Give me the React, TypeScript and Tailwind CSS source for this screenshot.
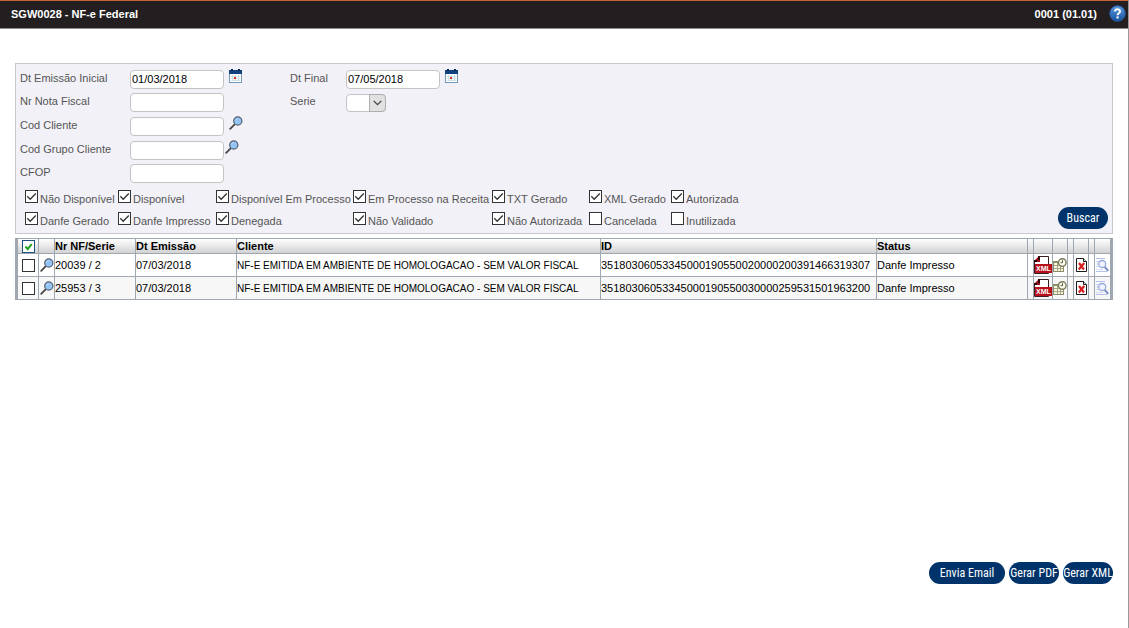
import { useState } from 'react'
import type { ComponentProps } from 'react'
import clsx from 'clsx'

const STATUS_FILTERS = [
  { label: 'Não Disponível', checked: true },
  { label: 'Disponível', checked: true },
  { label: 'Disponível Em Processo', checked: true },
  { label: 'Em Processo na Receita', checked: true },
  { label: 'TXT Gerado', checked: true },
  { label: 'XML Gerado', checked: true },
  { label: 'Autorizada', checked: true },
  { label: 'Danfe Gerado', checked: true },
  { label: 'Danfe Impresso', checked: true },
  { label: 'Denegada', checked: true },
  { label: 'Não Validado', checked: true },
  { label: 'Não Autorizada', checked: true },
  { label: 'Cancelada', checked: false },
  { label: 'Inutilizada', checked: false },
]

const INVOICES = [
  {
    numero: '20039 / 2',
    emissao: '07/03/2018',
    cliente: 'NF-E EMITIDA EM AMBIENTE DE HOMOLOGACAO - SEM VALOR FISCAL',
    id: '35180306053345000190550020000200391466319307',
    status: 'Danfe Impresso',
  },
  {
    numero: '25953 / 3',
    emissao: '07/03/2018',
    cliente: 'NF-E EMITIDA EM AMBIENTE DE HOMOLOGACAO - SEM VALOR FISCAL',
    id: '35180306053345000190550030000259531501963200',
    status: 'Danfe Impresso',
  },
]

function CalendarIcon() {
  return (
    <svg width="13" height="14" viewBox="0 0 13 14" className="block">
      <rect x="0.5" y="1.5" width="12" height="12" fill="#fff" stroke="#6f97b8" />
      <path d="M2 7.5h9M2 9.5h9M2 11.5h9M3.5 6v6M6.5 6v6M9.5 6v6" stroke="#cfe0e4" />
      <rect x="0" y="1" width="13" height="4" fill="#12407c" />
      <rect x="2" y="0" width="2" height="2" fill="#0c2c58" />
      <rect x="9" y="0" width="2" height="2" fill="#0c2c58" />
      <rect x="5" y="8" width="2" height="2" fill="#d93a2b" />
    </svg>
  )
}

function SearchIcon() {
  return (
    <svg width="14" height="14" viewBox="0 0 14 14" className="block shrink-0">
      <path d="M1.2 12.8 5.6 8.4" stroke="#4a4a4a" strokeWidth="1.9" strokeLinecap="round" />
      <circle cx="8.8" cy="5" r="4.1" fill="#93c4f6" stroke="#55606e" strokeWidth="1.2" />
      <path d="M6.6 4.4a2.4 2.4 0 0 1 2-1.8" stroke="#c5e0fb" fill="none" />
    </svg>
  )
}

function HelpIcon() {
  return (
    <svg width="17" height="17" viewBox="0 0 17 17" className="block">
      <defs>
        <linearGradient id="help" x1="0" y1="0" x2="0" y2="1">
          <stop offset="0" stopColor="#5e9ce0" />
          <stop offset="1" stopColor="#1550a0" />
        </linearGradient>
      </defs>
      <circle cx="8.5" cy="8.5" r="7.7" fill="url(#help)" stroke="#2a62ad" />
      <path d="M6 6.6c0-3.2 5-3.2 5-.2 0 1.9-2.4 1.9-2.4 3.8" fill="none" stroke="#fff" strokeWidth="2" />
      <rect x="7.5" y="11.4" width="2.1" height="2.1" fill="#fff" />
    </svg>
  )
}

function XmlIcon() {
  return (
    <svg width="18" height="19" viewBox="0 0 18 19" className="block">
      <path d="M5.5.5h9v17H.5v-12z" fill="#fff" stroke="#3a2020" />
      <path d="M0 6V5l5-5h1v6z" fill="#a50f1c" />
      <path d="M4 0h2v4H4zM0 4h3v2H0z" fill="#2c0508" />
      <rect x="1" y="8" width="17" height="9" fill="#b8101c" />
      <text
        x="9.5"
        y="15"
        textAnchor="middle"
        fill="#fff"
        fontSize="7"
        fontWeight="bold"
        fontFamily="Liberation Sans, sans-serif"
      >
        XML
      </text>
    </svg>
  )
}

function ScheduleIcon() {
  return (
    <svg width="14" height="14" viewBox="0 0 14 14" className="block">
      <rect x="0.5" y="3.5" width="10" height="10" fill="#f6f6e6" stroke="#8d8d68" />
      <path d="M1 4.5h6" stroke="#8d8d68" />
      <path d="M1 7.5h9M1 10.5h9M4.5 5v8M7.5 8v5" stroke="#a5a582" />
      <circle cx="9.3" cy="4.5" r="3.8" fill="#fbfbef" stroke="#7b7b58" strokeWidth="1.4" />
      <path d="M9.5 2.3v2.4H7.6" stroke="#55553c" fill="none" />
    </svg>
  )
}

function CancelIcon() {
  return (
    <svg width="11" height="14" viewBox="0 0 11 14" className="block">
      <path d="M.5.5h7l3 3v10H.5z" fill="#fff" stroke="#1c1c1c" />
      <path d="M7.5.5v3h3" fill="#ddd" stroke="#1c1c1c" />
      <path d="m3 5 5 6.5M8.2 5 2.8 11.5" stroke="#d51f1f" strokeWidth="2.2" />
    </svg>
  )
}

function PreviewIcon() {
  return (
    <svg width="14" height="14" viewBox="0 0 14 14" className="block">
      <path d="M1 .5h9M1.5 3.5h2M1.5 6h1.5M1.5 8.5h2M1 13.5h11" stroke="#b4c0e8" />
      <path d="M1 11.5h7" stroke="#d3daf2" />
      <circle cx="7.2" cy="6" r="3.5" fill="#eef3ff" stroke="#9aaade" strokeWidth="1.3" />
      <path d="m9.7 8.8 3.5 4" stroke="#7088c4" strokeWidth="1.9" />
    </svg>
  )
}

function TextField({ className, ...props }: ComponentProps<'input'>) {
  return (
    <input
      type="text"
      className={clsx(
        'h-[19px] w-[94px] rounded border border-[#c3c3c3] bg-white px-px text-[11px] text-black outline-none',
        className,
      )}
      {...props}
    />
  )
}

function CheckBox({ green, ...props }: ComponentProps<'input'> & { green?: boolean }) {
  return (
    <span className="grid shrink-0">
      <input
        type="checkbox"
        className={clsx(
          'peer col-start-1 row-start-1 m-0 size-[13px] appearance-none border bg-white',
          green ? 'border-[#1c5180]' : 'border-[#333]',
        )}
        {...props}
      />
      <svg
        viewBox="0 0 13 13"
        className="pointer-events-none invisible col-start-1 row-start-1 size-[13px] peer-checked:visible"
      >
        <path
          d={green ? 'm3.5 6.5 2.2 2.6 4-5' : 'm2.3 6.3 2.9 3 5.6-5.8'}
          fill="none"
          stroke={green ? '#21a121' : '#333'}
          strokeWidth={green ? 2 : 1.3}
        />
      </svg>
    </span>
  )
}

function PillButton({ className, ...props }: ComponentProps<'button'>) {
  return (
    <button
      type="button"
      className={clsx(
        "flex h-[22px] items-center justify-center rounded-full bg-[#003369] font-['Roboto_Condensed','Liberation_Sans_Narrow',Roboto,sans-serif] text-[12px] whitespace-nowrap text-white",
        className,
      )}
      {...props}
    />
  )
}

export default function App() {
  const [filters, setFilters] = useState(STATUS_FILTERS.map((f) => f.checked))
  const [selected, setSelected] = useState([false, false])
  const [all, setAll] = useState(true)

  const toggleFilter = (index: number) => setFilters(filters.map((v, i) => (i === index ? !v : v)))
  const toggleRow = (index: number) => setSelected(selected.map((v, i) => (i === index ? !v : v)))

  return (
    <div className="flex min-h-screen flex-col border-r border-[#999] bg-white font-['Liberation_Sans',Arial,sans-serif] text-[11px] text-black">
      <header className="flex h-[29px] items-center justify-between border-t border-b border-t-[#c8643c] border-b-[#8c8c8c] bg-[#231f20] pr-[2px] pb-px pl-[11px] font-bold text-white">
        <h1>SGW0028 - NF-e Federal</h1>
        <div className="flex items-center gap-3">
          <span>0001 (01.01)</span>
          <button type="button" aria-label="Ajuda" className="pb-[2px]">
            <HelpIcon />
          </button>
        </div>
      </header>

      <main className="flex grow flex-col px-[15px] pt-[34px] pb-11">
        <form className="border border-[#c8c8c8] bg-[#f2f1f7] pt-[3px] pl-1 text-[#555]">
          <div className="grid grid-cols-[110px_160px_56px_1fr] grid-rows-[24px_23px_24px_24px_23px] items-center [&>label]:pb-[2px]">
            <label htmlFor="dt-inicial">Dt Emissão Inicial</label>
            <div className="flex items-center gap-[5px]">
              <TextField id="dt-inicial" defaultValue="01/03/2018" />
              <button type="button" aria-label="Abrir calendário" className="pb-1.5">
                <CalendarIcon />
              </button>
            </div>
            <label htmlFor="dt-final">Dt Final</label>
            <div className="flex items-center gap-[5px]">
              <TextField id="dt-final" defaultValue="07/05/2018" />
              <button type="button" aria-label="Abrir calendário" className="pb-1.5">
                <CalendarIcon />
              </button>
            </div>

            <label htmlFor="nota">Nr Nota Fiscal</label>
            <TextField id="nota" />
            <label htmlFor="serie">Serie</label>
            <div className="grid w-10">
              <select
                id="serie"
                className="col-start-1 row-start-1 h-[18px] w-10 appearance-none rounded border border-[#c3c3c3] bg-white"
              >
                <option value=""></option>
              </select>
              <span className="pointer-events-none col-start-1 row-start-1 flex h-[18px] w-[17px] items-center justify-center justify-self-end rounded-r border border-[#adadad] bg-[#e1e1e1]">
                <svg width="9" height="6" viewBox="0 0 9 6">
                  <path d="m.7.9 3.8 3.8L8.3.9" fill="none" stroke="#444" strokeWidth="1.3" />
                </svg>
              </span>
            </div>

            <label htmlFor="cliente">Cod Cliente</label>
            <div className="col-span-3 flex items-center gap-[5px]">
              <TextField id="cliente" />
              <button type="button" aria-label="Pesquisar cliente" className="pb-1.5">
                <SearchIcon />
              </button>
            </div>

            <label htmlFor="grupo">Cod Grupo Cliente</label>
            <div className="col-span-3 flex items-center gap-px">
              <TextField id="grupo" />
              <button type="button" aria-label="Pesquisar grupo" className="pb-1.5">
                <SearchIcon />
              </button>
            </div>

            <label htmlFor="cfop">CFOP</label>
            <TextField id="cfop" />
          </div>

          <div className="flex items-end justify-between pt-[5px] pr-1">
            <div className="grid grid-cols-[93px_98px_137px_139px_97px_82px_auto] grid-rows-[22px_21px] pl-[5px]">
              {STATUS_FILTERS.map((filter, index) => (
                <label key={filter.label} className="flex items-start gap-[2px] whitespace-nowrap">
                  <CheckBox checked={filters[index]} onChange={() => toggleFilter(index)} />
                  <span className="pt-[2px] leading-[14px]">{filter.label}</span>
                </label>
              ))}
            </div>
            <PillButton className="mb-1 w-[50px]">Buscar</PillButton>
          </div>
        </form>

        <table className="mt-1 w-full table-fixed border-separate border-spacing-0 border-x-[3px] border-t border-[#9fa8b0] text-left whitespace-nowrap [&_td]:border-b [&_td]:border-[#9fa8b0] [&_td]:p-0 [&_td:not(:last-child)]:border-r [&_th]:border-b [&_th]:border-[#9fa8b0] [&_th]:p-0 [&_th:not(:last-child)]:border-r">
          <colgroup>
            <col className="w-[21px]" />
            <col className="w-4" />
            <col className="w-[81px]" />
            <col className="w-[101px]" />
            <col />
            <col className="w-[276px]" />
            <col className="w-[151px]" />
            <col className="w-1.5" />
            <col className="w-[19px]" />
            <col className="w-[15px]" />
            <col className="w-1.5" />
            <col className="w-[15px]" />
            <col className="w-1.5" />
            <col className="w-[15px]" />
          </colgroup>
          <thead className="bg-linear-to-b from-white to-[#cfcfcf]">
            <tr className="h-[15px] leading-[14px]">
              <th>
                <div className="flex justify-center">
                  <CheckBox
                    green
                    aria-label="Selecionar todas"
                    checked={all}
                    onChange={() => setAll(!all)}
                  />
                </div>
              </th>
              <th />
              <th>Nr NF/Serie</th>
              <th>Dt Emissão</th>
              <th>Cliente</th>
              <th>ID</th>
              <th>Status</th>
              <th />
              <th />
              <th />
              <th />
              <th />
              <th />
              <th />
            </tr>
          </thead>
          <tbody>
            {INVOICES.map((invoice, index) => (
              <tr key={invoice.id} className="h-[23px] even:bg-[#f7f7f7]">
                <td>
                  <div className="flex justify-center">
                    <CheckBox
                      aria-label={`Selecionar ${invoice.numero}`}
                      checked={selected[index]}
                      onChange={() => toggleRow(index)}
                    />
                  </div>
                </td>
                <td>
                  <button type="button" aria-label="Detalhes" className="block pl-px">
                    <SearchIcon />
                  </button>
                </td>
                <td>{invoice.numero}</td>
                <td>{invoice.emissao}</td>
                <td className="text-[10px]">{invoice.cliente}</td>
                <td>{invoice.id}</td>
                <td>{invoice.status}</td>
                <td />
                <td>
                  <button type="button" aria-label="Baixar XML" className="block">
                    <XmlIcon />
                  </button>
                </td>
                <td>
                  <button type="button" aria-label="Histórico" className="block">
                    <ScheduleIcon />
                  </button>
                </td>
                <td />
                <td>
                  <button type="button" aria-label="Cancelar" className="block pl-[2px]">
                    <CancelIcon />
                  </button>
                </td>
                <td />
                <td>
                  <button type="button" aria-label="Visualizar" className="block">
                    <PreviewIcon />
                  </button>
                </td>
              </tr>
            ))}
          </tbody>
        </table>

        <div className="mt-auto flex justify-end gap-1 pt-8">
          <PillButton className="w-[76px]">Envia Email</PillButton>
          <PillButton className="w-[50px]">Gerar PDF</PillButton>
          <PillButton className="w-[50px]">Gerar XML</PillButton>
        </div>
      </main>
    </div>
  )
}
